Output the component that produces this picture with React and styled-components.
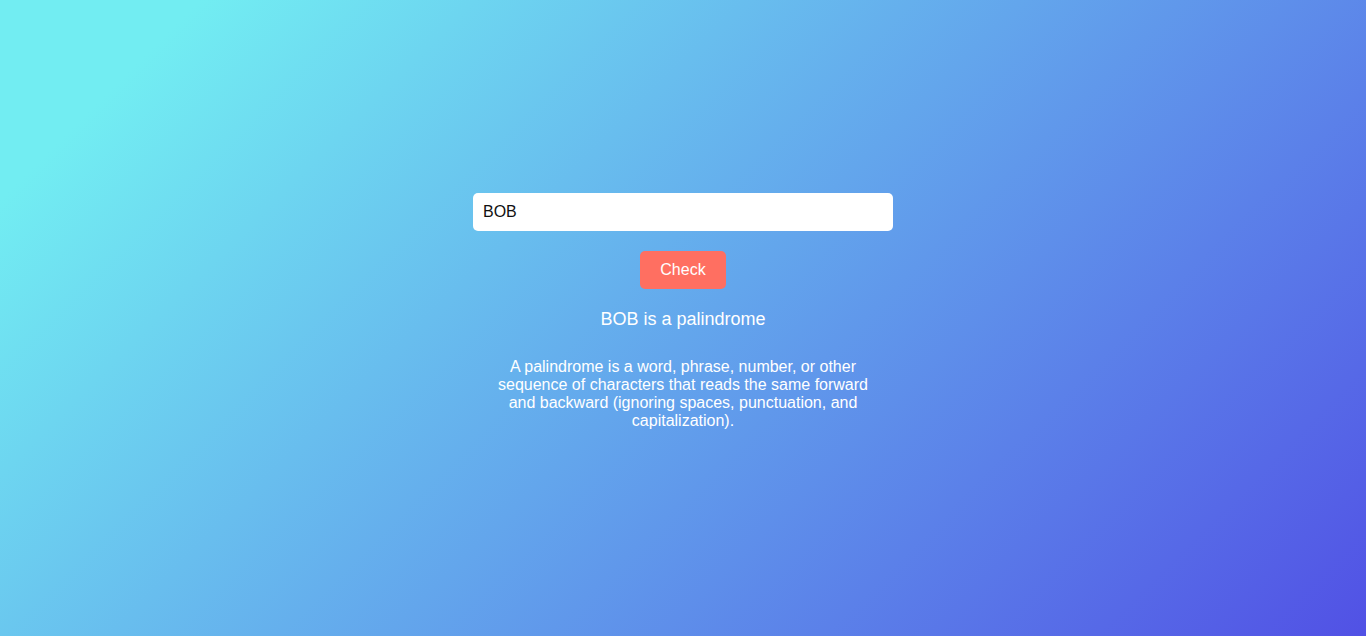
import React, { useState } from 'react';
import styled, { createGlobalStyle } from 'styled-components';

const GlobalStyle = createGlobalStyle`
  html, body {
    margin: 0;
    padding: 0;
    height: 100%;
  }
  body {
    font-family: "Liberation Sans", Arial, sans-serif;
  }
`;

const Page = styled.div`
  min-height: 100vh;
  background: linear-gradient(135deg, #72edf2 10%, #5151e5 100%);
  display: flex;
  align-items: center;
  justify-content: center;
`;

const Panel = styled.div`
  width: 420px;
  display: flex;
  flex-direction: column;
  align-items: center;
  text-align: center;
  color: #fff;
`;

const TextField = styled.input`
  width: 100%;
  box-sizing: border-box;
  height: 38px;
  padding: 0 10px;
  border: none;
  border-radius: 5px;
  background: #fff;
  color: #111;
  font-family: "Liberation Sans", Arial, sans-serif;
  font-size: 16px;
  outline: none;
`;

const CheckButton = styled.button`
  margin-top: 20px;
  height: 38px;
  padding: 0 20px;
  border: none;
  border-radius: 5px;
  background: #ff6f61;
  color: #fff;
  font-family: "Liberation Sans", Arial, sans-serif;
  font-size: 16px;
  cursor: pointer;
`;

const Result = styled.p`
  margin: 20px 0 0;
  font-size: 18px;
`;

const Definition = styled.p`
  max-width: 380px;
  margin: 28px 0 14px;
  font-size: 16px;
  line-height: 18px;
`;

const isPalindrome = (s) => {
  const clean = s.toLowerCase().replace(/[^a-z0-9]/g, '');
  return clean.length > 0 && clean === clean.split('').reverse().join('');
};

export default function App() {
  const [text, setText] = useState('BOB');
  const [checked, setChecked] = useState('BOB');

  return (
    <Page>
      <GlobalStyle />
      <Panel>
        <TextField value={text} onChange={(e) => setText(e.target.value)} />
        <CheckButton onClick={() => setChecked(text)}>Check</CheckButton>
        {checked && (
          <Result>
            {checked} {isPalindrome(checked) ? 'is a palindrome' : 'is not a palindrome'}
          </Result>
        )}
        <Definition>
          A palindrome is a word, phrase, number, or other sequence of characters that reads the same
          forward and backward (ignoring spaces, punctuation, and capitalization).
        </Definition>
      </Panel>
    </Page>
  );
}
